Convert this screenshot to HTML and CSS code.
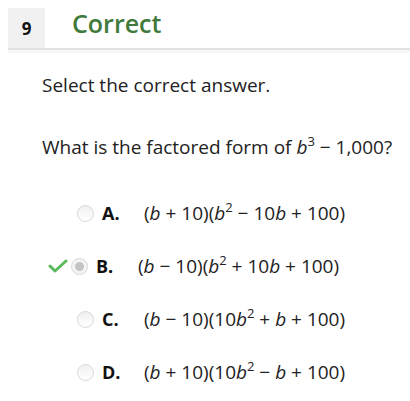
FILE: index.html
```html
<!DOCTYPE html>
<html>
<head>
<meta charset="utf-8">
<link rel="stylesheet" href="styles.css">
</head>
<body>
<div class="header">
  <div class="num">9</div>
  <div class="status">Correct</div>
</div>
<div class="content">
  <p class="instr">Select the correct answer.</p>
  <p class="question">What is the factored form of <i>b</i><sup>3</sup> − 1,000?</p>
  <div class="options">
    <div class="opt">
      <span class="check"></span>
      <span class="radio"></span>
      <span class="letter">A.</span>
      <span class="math">(<i>b</i> + 10)(<i>b</i><sup>2</sup> − 10<i>b</i> + 100)</span>
    </div>
    <div class="opt chosen">
      <span class="check"><svg width="20" height="14" viewBox="0 0 20 14"><path d="M2 7 L7 12 L18 2" fill="none" stroke="#5cb85c" stroke-width="3" stroke-linecap="round" stroke-linejoin="round"/></svg></span>
      <span class="radio sel"></span>
      <span class="letter">B.</span>
      <span class="math">(<i>b</i> − 10)(<i>b</i><sup>2</sup> + 10<i>b</i> + 100)</span>
    </div>
    <div class="opt">
      <span class="check"></span>
      <span class="radio"></span>
      <span class="letter">C.</span>
      <span class="math">(<i>b</i> − 10)(10<i>b</i><sup>2</sup> + <i>b</i> + 100)</span>
    </div>
    <div class="opt">
      <span class="check"></span>
      <span class="radio"></span>
      <span class="letter">D.</span>
      <span class="math">(<i>b</i> + 10)(10<i>b</i><sup>2</sup> − <i>b</i> + 100)</span>
    </div>
  </div>
</div>
</body>
</html>
```
FILE: styles.css
```css
html, body { margin: 0; padding: 0; background: #fff; }
body { font-family: "Open Sans", "Liberation Sans", sans-serif; color: #222; }
.header {
  display: flex;
  align-items: center;
  margin: 8px 0 0 8px;
  border-bottom: 2px solid #e2e2e2;
  box-shadow: 0 3px 0 #f6f6f6;
}
.num {
  width: 37px;
  height: 40px;
  background: #f1f1f1;
  display: flex;
  align-items: center;
  justify-content: center;
  font-weight: 700;
  font-size: 17px;
  color: #111;
}
.status {
  align-self: flex-start;
  margin-top: -2px;
  margin-left: 27px;
  font-size: 25px;
  line-height: 34px;
  font-weight: 600;
  color: #3f7a3c;
}
.content { padding-left: 42px; }
.instr { margin: 22px 0 0; font-size: 19px; line-height: 26px; }
.question { margin: 36px 0 0; font-size: 19px; line-height: 26px; }
sup { font-size: 13px; line-height: 0; vertical-align: 8px; }
i { font-style: italic; }
.options { margin-top: 40px; display: flex; flex-direction: column; gap: 27px; }
.opt { display: flex; align-items: center; height: 26px; margin-left: 6px; }
.check { width: 29px; height: 14px; display: flex; }
.radio {
  width: 17px; height: 17px; border-radius: 50%;
  border: 1px solid #d8d8d8; box-sizing: border-box;
  background: linear-gradient(#f0f0f0, #fff);
}
.radio.sel {
  background: radial-gradient(circle, #c4c4c4 0 4px, #f4f4f4 5px);
}
.letter { margin-left: 8px; width: 42px; font-weight: 700; font-size: 18px; color: #111; }
.math { font-size: 19px; }
.opt.chosen .check { width: 23px; }
```
